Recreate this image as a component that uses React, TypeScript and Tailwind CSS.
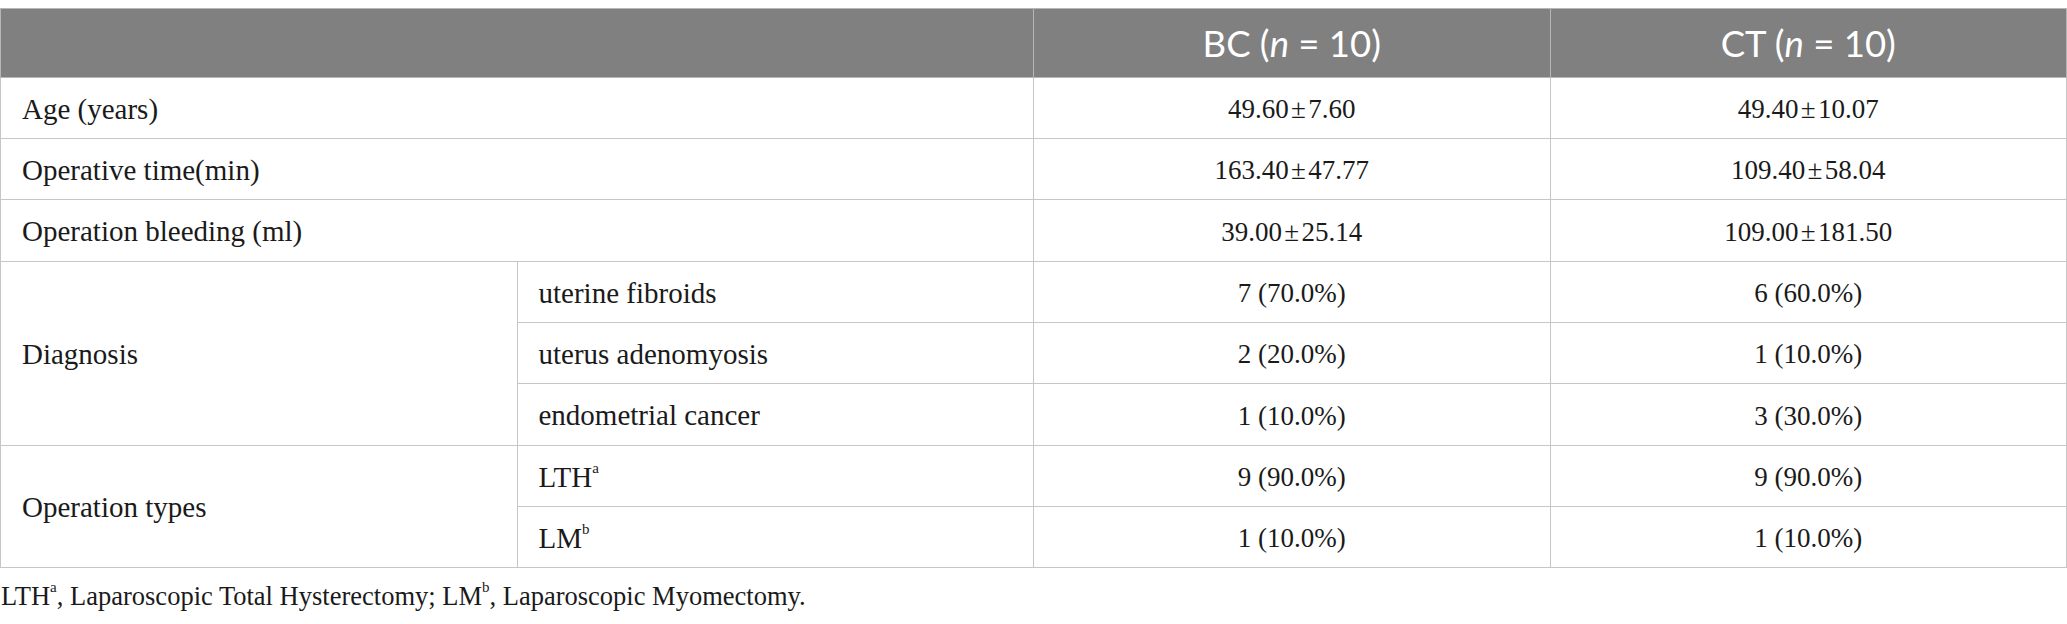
import React from "react";

const serif = "font-['Liberation_Serif','Times_New_Roman',serif]";
const cellL = `border border-[#c6c6c6] pl-[21px] pt-[3px] text-left align-middle text-[29px] text-[#1a1a1a] ${serif}`;
const cellC = `border border-[#c6c6c6] pt-[3px] text-center align-middle text-[27px] text-[#1a1a1a] ${serif}`;

function Sup({ children }: { children: React.ReactNode }) {
  return <sup className="relative -top-[3px] text-[15px] leading-none align-super">{children}</sup>;
}

const pm = "\u200A±\u200A";

export default function App() {
  return (
    <div className="w-[2067px] bg-white pt-[8px]">
      <table className="w-full table-fixed border-collapse">
        <colgroup>
          <col className="w-1/4" />
          <col className="w-1/4" />
          <col className="w-1/4" />
          <col className="w-1/4" />
        </colgroup>
        <thead>
          <tr className="h-[69px] bg-[#7f807f]">
            <th colSpan={2} className="border border-[#b5b6b5]" />
            <th className="border border-[#b5b6b5] text-center align-middle font-['Lato',sans-serif] text-[36.5px] font-normal text-white">
              BC (<i>n</i> = 10)
            </th>
            <th className="border border-[#b5b6b5] text-center align-middle font-['Lato',sans-serif] text-[36.5px] font-normal text-white">
              CT (<i>n</i> = 10)
            </th>
          </tr>
        </thead>
        <tbody>
          <tr className="h-[61px]">
            <td colSpan={2} className={cellL}>Age (years)</td>
            <td className={cellC}>49.60{pm}7.60</td>
            <td className={cellC}>49.40{pm}10.07</td>
          </tr>
          <tr className="h-[61px]">
            <td colSpan={2} className={cellL}>Operative time(min)</td>
            <td className={cellC}>163.40{pm}47.77</td>
            <td className={cellC}>109.40{pm}58.04</td>
          </tr>
          <tr className="h-[62px]">
            <td colSpan={2} className={cellL}>Operation bleeding (ml)</td>
            <td className={cellC}>39.00{pm}25.14</td>
            <td className={cellC}>109.00{pm}181.50</td>
          </tr>
          <tr className="h-[61px]">
            <td rowSpan={3} className={cellL}>Diagnosis</td>
            <td className={cellL}>uterine fibroids</td>
            <td className={cellC}>7 (70.0%)</td>
            <td className={cellC}>6 (60.0%)</td>
          </tr>
          <tr className="h-[61px]">
            <td className={cellL}>uterus adenomyosis</td>
            <td className={cellC}>2 (20.0%)</td>
            <td className={cellC}>1 (10.0%)</td>
          </tr>
          <tr className="h-[62px]">
            <td className={cellL}>endometrial cancer</td>
            <td className={cellC}>1 (10.0%)</td>
            <td className={cellC}>3 (30.0%)</td>
          </tr>
          <tr className="h-[61px]">
            <td rowSpan={2} className={cellL}>Operation types</td>
            <td className={cellL}>
              LTH<Sup>a</Sup>
            </td>
            <td className={cellC}>9 (90.0%)</td>
            <td className={cellC}>9 (90.0%)</td>
          </tr>
          <tr className="h-[61px]">
            <td className={cellL}>
              LM<Sup>b</Sup>
            </td>
            <td className={cellC}>1 (10.0%)</td>
            <td className={cellC}>1 (10.0%)</td>
          </tr>
        </tbody>
      </table>
      <p className={`mt-[10px] pl-[1px] text-[26.5px] leading-[36px] text-[#1a1a1a] ${serif}`}>
        LTH<Sup>a</Sup>, Laparoscopic Total Hysterectomy; LM<Sup>b</Sup>, Laparoscopic Myomectomy.
      </p>
    </div>
  );
}
